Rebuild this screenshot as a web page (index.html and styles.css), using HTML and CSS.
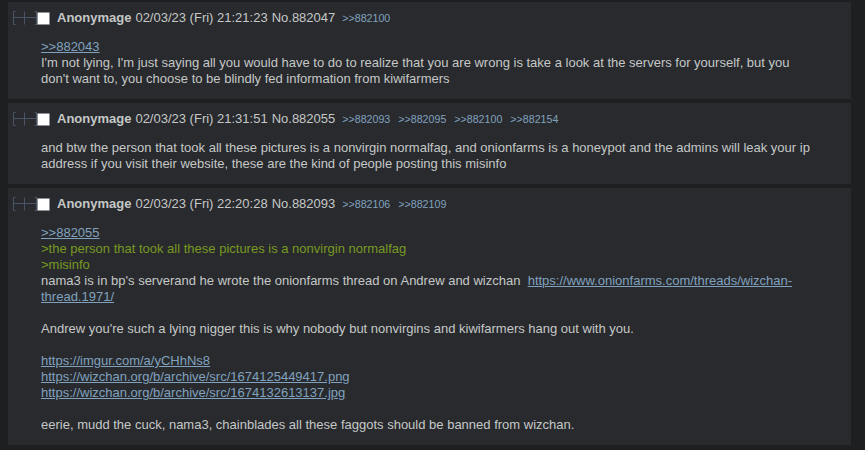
FILE: index.html
```html
<!doctype html>
<html lang="en">
<head>
  <meta charset="utf-8">
  <link rel="stylesheet" href="styles.css">
</head>
<body>

  <div class="thread">

    <div class="post">
      <div class="post-head">
        <svg class="hide-toggle" width="24" height="14" viewBox="0 0 24 14">
          <path d="M2.5 0.5 H0.5 V13.5 H2.5 M21.5 0.5 H23.5 V13.5 H21.5 M0.5 6.5 H23.5 M11.5 0.5 V13.5" fill="none" stroke="#4b5466" stroke-width="1"/>
        </svg>
        <span class="check"></span>
        <span class="name">Anonymage</span>
        <span class="time">02/03/23 (Fri) 21:21:23</span>
        <span class="post-no">No.882047</span>
        <span class="replies">
          <a href="#">&gt;&gt;882100</a>
        </span>
      </div>
      <div class="post-body">
        <a class="quote-link" href="#">&gt;&gt;882043</a><br>
        I'm not lying, I'm just saying all you would have to do to realize that you are wrong is take a look at the servers for yourself, but you don't want to, you choose to be blindly fed information from kiwifarmers
      </div>
    </div>

    <div class="post">
      <div class="post-head">
        <svg class="hide-toggle" width="24" height="14" viewBox="0 0 24 14">
          <path d="M2.5 0.5 H0.5 V13.5 H2.5 M21.5 0.5 H23.5 V13.5 H21.5 M0.5 6.5 H23.5 M11.5 0.5 V13.5" fill="none" stroke="#4b5466" stroke-width="1"/>
        </svg>
        <span class="check"></span>
        <span class="name">Anonymage</span>
        <span class="time">02/03/23 (Fri) 21:31:51</span>
        <span class="post-no">No.882055</span>
        <span class="replies">
          <a href="#">&gt;&gt;882093</a>
          <a href="#">&gt;&gt;882095</a>
          <a href="#">&gt;&gt;882100</a>
          <a href="#">&gt;&gt;882154</a>
        </span>
      </div>
      <div class="post-body">
        and btw the person that took all these pictures is a nonvirgin normalfag, and onionfarms is a honeypot and the admins will leak your ip address if you visit their website, these are the kind of people posting this misinfo
      </div>
    </div>

    <div class="post">
      <div class="post-head">
        <svg class="hide-toggle" width="24" height="14" viewBox="0 0 24 14">
          <path d="M2.5 0.5 H0.5 V13.5 H2.5 M21.5 0.5 H23.5 V13.5 H21.5 M0.5 6.5 H23.5 M11.5 0.5 V13.5" fill="none" stroke="#4b5466" stroke-width="1"/>
        </svg>
        <span class="check"></span>
        <span class="name">Anonymage</span>
        <span class="time">02/03/23 (Fri) 22:20:28</span>
        <span class="post-no">No.882093</span>
        <span class="replies">
          <a href="#">&gt;&gt;882106</a>
          <a href="#">&gt;&gt;882109</a>
        </span>
      </div>
      <div class="post-body">
        <a class="quote-link" href="#">&gt;&gt;882055</a><br>
        <span class="greentext">&gt;the person that took all these pictures is a nonvirgin normalfag</span><br>
        <span class="greentext">&gt;misinfo</span><br>
        nama3 is in bp's serverand he wrote the onionfarms thread on Andrew and wizchan&nbsp;&nbsp;<a class="quote-link" href="#">https://www.onionfarms.com/threads/wizchan-thread.1971/</a><br>
        <br>
        Andrew you're such a lying nigger this is why nobody but nonvirgins and kiwifarmers hang out with you.<br>
        <br>
        <a class="quote-link" href="#">https://imgur.com/a/yCHhNs8</a><br>
        <a class="quote-link" href="#">https://wizchan.org/b/archive/src/1674125449417.png</a><br>
        <a class="quote-link" href="#">https://wizchan.org/b/archive/src/1674132613137.jpg</a><br>
        <br>
        eerie, mudd the cuck, nama3, chainblades all these faggots should be banned from wizchan.
      </div>
    </div>

  </div>

</body>
</html>
```

FILE: styles.css
```css
html, body {
  margin: 0;
  padding: 0;
  background-color: #1d1f21;
  font-family: "Liberation Sans", Arial, sans-serif;
  font-size: 13px;
  color: #c5c8c6;
}

.thread {
  display: flex;
  flex-direction: column;
  gap: 4px;
  padding: 2px 14px 0 8px;
}

.post {
  background-color: #282a2e;
  padding: 8px 0 12px 0;
}

.post-head {
  display: flex;
  align-items: center;
  height: 16px;
  line-height: 16px;
  white-space: nowrap;
}

.hide-toggle {
  margin-left: 5px;
  flex: none;
}

.check {
  flex: none;
  box-sizing: border-box;
  width: 13px;
  height: 13px;
  background-color: #ffffff;
  border: 1px solid #8d8f94;
  border-radius: 1px;
}

.name {
  margin-left: 7px;
  font-weight: bold;
}

.time {
  margin-left: 4px;
}

.post-no {
  margin-left: 4px;
}

.replies {
  display: flex;
  gap: 8px;
  margin-left: 7px;
  font-size: 8pt;
}

.replies a {
  color: #81a2be;
  text-decoration: none;
}

.post-body {
  margin: 13px 33px 0 33px;
  line-height: 16px;
}

.quote-link {
  color: #81a2be;
  text-decoration: underline;
}

.greentext {
  color: #789922;
}
```
